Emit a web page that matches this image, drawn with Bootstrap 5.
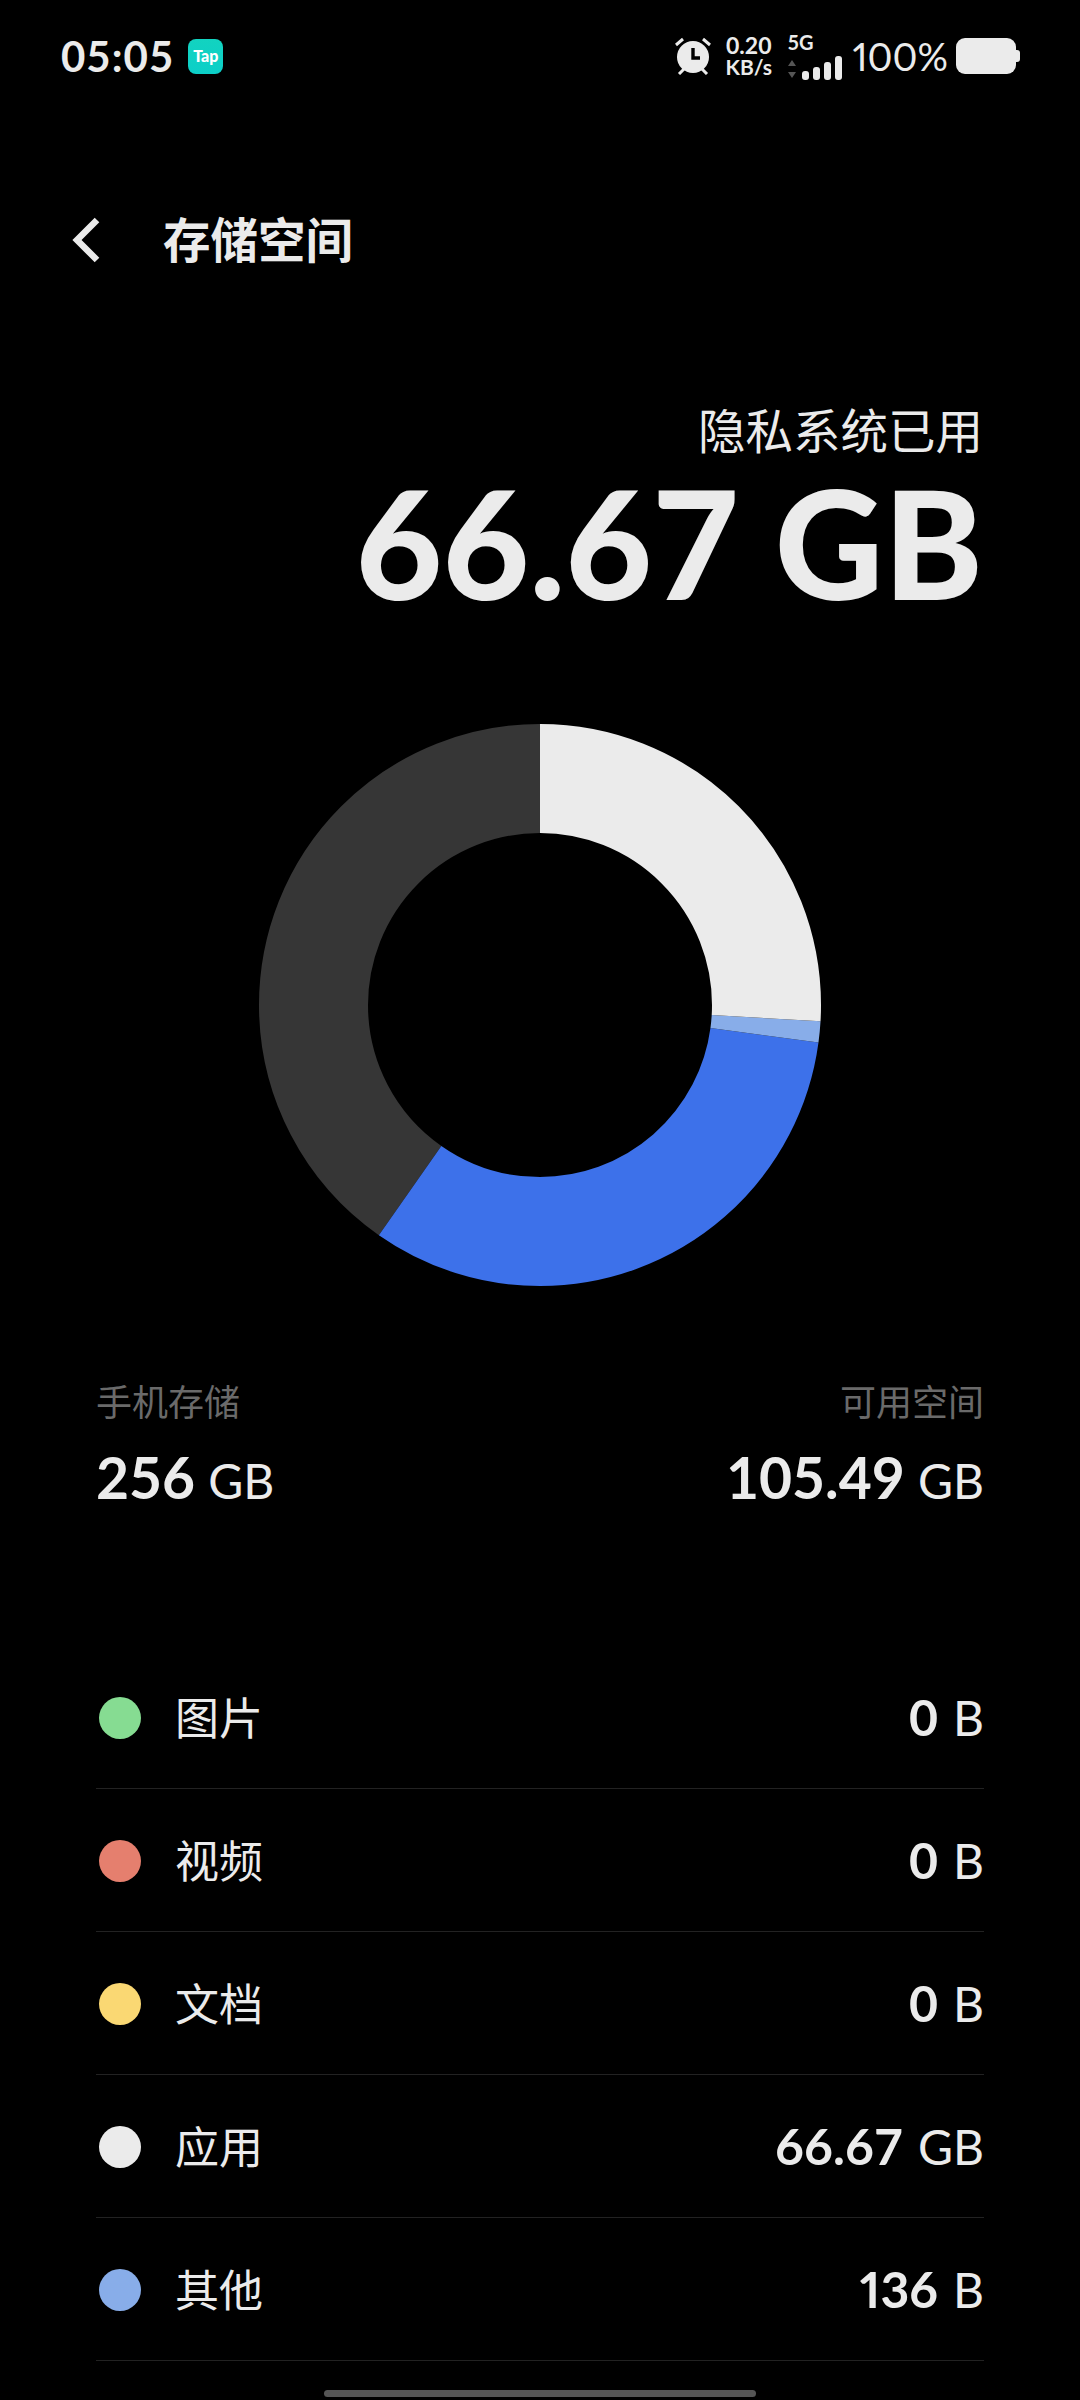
<!DOCTYPE html>
<html lang="zh">
<head>
    <meta charset="UTF-8">
    <title>存储空间</title>
    <link href="https://cdn.jsdelivr.net/npm/bootstrap@5.3.0/dist/css/bootstrap.min.css" rel="stylesheet">
    <style>
        body {
            background: #000;
            color: #ebebeb;
            font-family: Lato, "Noto Sans CJK SC", sans-serif;
        }

        .phone { width: 1080px; height: 2400px; overflow: hidden; position: relative; }

        /* status bar */
        .status-row { height: 112px; padding: 0 60px 0 61px; }
        .clock { font-size: 42px; line-height: 1; font-weight: 700; letter-spacing: 1px; }
        .tap-icon {
            width: 35px; height: 35px; border-radius: 8px; margin-left: 14px;
            background: linear-gradient(#12d3c0, #0ccfc8);
            color: #fff; font-size: 16px; font-weight: 900; line-height: 33px; text-align: center;
        }
        .net-speed { font-size: 21px; line-height: 22px; font-weight: 700; text-align: right; width: 46px; margin-left: 13px; }
        .net-speed div:first-child { font-size: 23px; }
        .battery-text { font-size: 38px; line-height: 1; margin-left: 10px; font-variant-numeric: proportional-nums; }
        .sig-text { font-size: 20px; line-height: 1; font-weight: 700; }

        /* header */
        .title-row { height: 104px; padding-left: 72px; margin-top: 76px; }
        .page-title { font-size: 47.5px; line-height: 1; font-weight: 700; margin-left: 63px; }

        /* hero */
        .hero { padding: 109px 97px 0 0; height: 432px; }
        .hero-label { font-size: 47.5px; line-height: 60px; font-weight: 400; }
        .hero-value { font-size: 150px; line-height: 140px; font-weight: 900; margin-top: 11px; }

        .donut-wrap { height: 562px; }

        /* summary */
        .summary { padding: 0 96px 0 96px; margin-top: 94px; height: 266px; }
        .summary-label { font-size: 36px; line-height: 44px; color: #6a6a6a; }
        .summary-value { margin-top: 23px; line-height: 60px; white-space: nowrap; }
        .num { font-size: 57px; font-weight: 700; }
        .num-prop { font-variant-numeric: proportional-nums; }
        .unit { font-size: 48px; font-weight: 400; margin-left: 9px; }

        /* file type rows */
        .type-list { margin: 0 96px; --bs-list-group-bg: transparent; --bs-list-group-color: #ebebeb; --bs-list-group-border-color: #222; }
        .type-item { height: 143px; padding: 1px 0 0 3px; display: flex; align-items: center; }
        .type-list .type-item:last-child { border-bottom-width: 1px; }
        .dot { width: 42px; height: 42px; border-radius: 50%; flex-shrink: 0; }
        .type-name { font-size: 44px; line-height: 1; margin-left: 34px; }
        .type-size { margin-left: auto; line-height: 60px; padding-top: 12px; }
        .type-size .num { font-size: 50px; }
        .type-size .unit { margin-left: 15px; }

        .bg-pic { background: #86dc92; }
        .bg-vid { background: #e57f6e; }
        .bg-doc { background: #fad873; }
        .bg-app { background: #ebebeb; }
        .bg-oth { background: #88ade9; }

        .home-bar { position: absolute; left: 324px; top: 2390px; width: 432px; height: 7px; border-radius: 4px; background: #555; }
    </style>
</head>
<body>
<div class="phone">
    <div class="status-row d-flex align-items-center">
        <div class="clock">05:05</div>
        <div class="tap-icon">Tap</div>
        <div class="ms-auto d-flex align-items-center">
            <!-- alarm -->
            <svg width="38" height="38" viewBox="0 0 38 38">
                <circle cx="19" cy="20" r="16" fill="#ebebeb"/>
                <path d="M19 11v10h7" fill="none" stroke="#000" stroke-width="3.4"/>
                <path d="M2 8l7-6M36 8l-7-6M5 37l5-5M33 37l-5-5" fill="none" stroke="#ebebeb" stroke-width="3"/>
            </svg>
            <div class="net-speed"><div>0.20</div><div>KB/s</div></div>
            <div class="ms-3 d-flex flex-column">
                <div class="sig-text">5G</div>
                <svg class="mt-1" width="55" height="24" viewBox="0 0 55 24">
                    <path d="M5 4l4 6H1zM5 22l4-6H1z" fill="#555"/>
                    <rect x="15" y="15" width="7" height="9" rx="3" fill="#ebebeb"/>
                    <rect x="26" y="11" width="7" height="13" rx="3" fill="#ebebeb"/>
                    <rect x="37" y="6" width="7" height="18" rx="3" fill="#ebebeb"/>
                    <rect x="48" y="0" width="7" height="24" rx="3" fill="#ebebeb"/>
                </svg>
            </div>
            <div class="battery-text">100%</div>
            <svg class="ms-2" width="64" height="36" viewBox="0 0 64 36">
                <rect x="0" y="0" width="60" height="36" rx="9" fill="#ebebeb"/>
                <path d="M60 12h1a3 3 0 0 1 3 3v6a3 3 0 0 1-3 3h-1z" fill="#ebebeb"/>
            </svg>
        </div>
    </div>

    <div class="title-row d-flex align-items-center">
        <svg width="28" height="46" viewBox="0 0 28 46">
            <path d="M25 3L5 23l20 20" fill="none" stroke="#ebebeb" stroke-width="6.5"/>
        </svg>
        <div class="page-title">存储空间</div>
    </div>

    <div class="hero text-end">
        <div class="hero-label">隐私系统已用</div>
        <div class="hero-value">66.67 GB</div>
    </div>

    <div class="donut-wrap d-flex justify-content-center">
        <!-- dash values are degrees clockwise from 12 o'clock -->
        <svg width="562" height="562" viewBox="0 0 562 562">
            <g fill="none" stroke-width="109" transform="rotate(-90 281 281)">
                <circle cx="281" cy="281" r="226.5" pathLength="360" stroke="#363636" stroke-dasharray="145 360" stroke-dashoffset="-215"/>
                <circle cx="281" cy="281" r="226.5" pathLength="360" stroke="#3d71ea" stroke-dasharray="117.3 360" stroke-dashoffset="-97.7"/>
                <circle cx="281" cy="281" r="226.5" pathLength="360" stroke="#88ade9" stroke-dasharray="4.35 360" stroke-dashoffset="-93.35"/>
                <circle cx="281" cy="281" r="226.5" pathLength="360" stroke="#ebebeb" stroke-dasharray="93.35 360"/>
            </g>
        </svg>
    </div>

    <div class="summary d-flex justify-content-between">
        <div>
            <div class="summary-label">手机存储</div>
            <div class="summary-value"><span class="num">256</span> <span class="unit">GB</span></div>
        </div>
        <div class="text-end">
            <div class="summary-label">可用空间</div>
            <div class="summary-value"><span class="num">105.49</span> <span class="unit">GB</span></div>
        </div>
    </div>

    <ul class="list-group list-group-flush type-list">
        <li class="list-group-item type-item"><span class="dot bg-pic"></span><span class="type-name">图片</span><span class="type-size"><span class="num">0</span><span class="unit">B</span></span></li>
        <li class="list-group-item type-item"><span class="dot bg-vid"></span><span class="type-name">视频</span><span class="type-size"><span class="num">0</span><span class="unit">B</span></span></li>
        <li class="list-group-item type-item"><span class="dot bg-doc"></span><span class="type-name">文档</span><span class="type-size"><span class="num">0</span><span class="unit">B</span></span></li>
        <li class="list-group-item type-item"><span class="dot bg-app"></span><span class="type-name">应用</span><span class="type-size"><span class="num">66.67</span><span class="unit">GB</span></span></li>
        <li class="list-group-item type-item"><span class="dot bg-oth"></span><span class="type-name">其他</span><span class="type-size"><span class="num num-prop">136</span><span class="unit">B</span></span></li>
    </ul>

    <div class="home-bar"></div>
</div>
<script src="https://cdn.jsdelivr.net/npm/bootstrap@5.3.0/dist/js/bootstrap.bundle.min.js"></script>
</body>
</html>
